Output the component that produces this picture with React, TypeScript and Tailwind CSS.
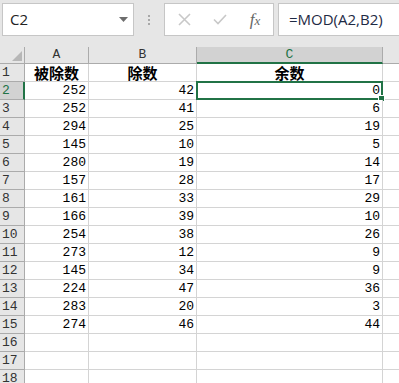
import React from "react";

const rows: [number, number][] = [
  [252, 42],
  [252, 41],
  [294, 25],
  [145, 10],
  [280, 19],
  [157, 28],
  [161, 33],
  [166, 39],
  [254, 38],
  [273, 12],
  [145, 34],
  [224, 47],
  [283, 20],
  [274, 46],
];

const cellFont = { fontFamily: '"Liberation Mono", "Noto Sans CJK SC", monospace' };
const uiFont = { fontFamily: '"Open Sans", "Noto Sans", sans-serif' };

function Toolbar() {
  return (
    <div className="flex h-[47px] items-start bg-[#e6e6e6] pt-[3px]">
      {/* name box */}
      <div className="ml-[2px] flex h-[33px] w-[132px] items-center justify-between border border-[#c6c6c6] bg-white pl-[7px] pr-[5px]">
        <span className="text-[15px] text-[#222]" style={uiFont}>
          C2
        </span>
        <svg width="9" height="5" viewBox="0 0 9 5">
          <path d="M0 0h9L4.5 5z" fill="#6d6d6d" />
        </svg>
      </div>
      {/* dots */}
      <div className="flex h-[33px] w-[30px] flex-col items-center justify-center gap-[2px]">
        <span className="h-[2px] w-[2px] bg-[#a8a8a8]" />
        <span className="h-[2px] w-[2px] bg-[#a8a8a8]" />
        <span className="h-[2px] w-[2px] bg-[#a8a8a8]" />
      </div>
      {/* cancel / enter / fx */}
      <div className="flex h-[33px] w-[110px] items-center border border-[#c6c6c6] bg-white">
        <div className="flex w-[38px] justify-center">
          <svg width="13" height="13" viewBox="0 0 13 13">
            <path d="M1 1l11 11M12 1L1 12" stroke="#c8c8c8" strokeWidth="1.6" />
          </svg>
        </div>
        <div className="flex w-[34px] justify-center">
          <svg width="14" height="11" viewBox="0 0 14 11">
            <path d="M1 5.5l4 4 8-8.5" stroke="#c8c8c8" strokeWidth="1.6" fill="none" />
          </svg>
        </div>
        <div
          className="flex w-[36px] items-baseline justify-center text-[17px] italic text-[#666]"
          style={{ fontFamily: '"Liberation Serif", serif' }}
        >
          f<span className="text-[13px]">x</span>
        </div>
      </div>
      {/* formula */}
      <div className="ml-[4px] flex h-[33px] flex-1 items-center border border-r-0 border-[#c6c6c6] bg-white pl-[10px]">
        <span className="text-[15px] text-[#1e2a44]" style={uiFont}>
          =MOD(A2,B2)
        </span>
      </div>
    </div>
  );
}

function HeaderRow() {
  return (
    <div className="flex h-[17px] text-[13px] leading-[16px]" style={cellFont}>
      <div className="relative w-[25px] shrink-0 border-r border-b border-[#ababab] bg-[#e6e6e6]">
        <svg className="absolute right-[2px] bottom-[2px]" width="10" height="10" viewBox="0 0 10 10">
          <path d="M10 0v10H0z" fill="#b7b7b7" />
        </svg>
      </div>
      <div className="w-[64px] shrink-0 border-r border-b border-[#ababab] bg-[#e6e6e6] text-center text-[#333]">A</div>
      <div className="w-[108px] shrink-0 border-r border-b border-[#ababab] bg-[#e6e6e6] text-center text-[#333]">B</div>
      <div className="w-[186px] shrink-0 border-r border-b-2 border-r-[#ababab] border-b-[#217346] bg-[#d2d2d2] text-center text-[#217346]">
        C
      </div>
      <div className="flex-1 border-b border-[#ababab] bg-[#e6e6e6]" />
    </div>
  );
}

function Row({
  n,
  a,
  b,
  c,
  bold,
  selected,
}: {
  n: number;
  a?: React.ReactNode;
  b?: React.ReactNode;
  c?: React.ReactNode;
  bold?: boolean;
  selected?: boolean;
}) {
  const align = bold ? "justify-center font-bold text-[15px]" : "justify-end pr-[2px]";
  const boldFont = bold ? { fontFamily: '"Noto Sans CJK SC", sans-serif' } : undefined;
  return (
    <div className="flex h-[18px] text-[13px] leading-[17px] text-black" style={cellFont}>
      <div
        className={`w-[25px] shrink-0 border-b border-[#ababab] pl-[2px] ${
          selected
            ? "border-r-2 border-r-[#217346] bg-[#d2d2d2] text-[#217346]"
            : "border-r border-r-[#ababab] bg-[#e6e6e6] text-[#333]"
        }`}
      >
        {n}
      </div>
      <div className={`flex w-[64px] shrink-0 items-end border-r border-b border-[#d4d4d4] bg-white ${align}`} style={boldFont}>
        {a}
      </div>
      <div className={`flex w-[108px] shrink-0 items-end border-r border-b border-[#d4d4d4] bg-white ${align}`} style={boldFont}>
        {b}
      </div>
      <div className={`relative flex w-[186px] shrink-0 items-end border-r border-b border-[#d4d4d4] bg-white ${align}`} style={boldFont}>
        {c}
        {selected && (
          <>
            <div className="absolute -top-[1px] -left-[1px] h-[19px] w-[187px] border-2 border-[#217346]" />
            <div className="absolute -right-[3px] -bottom-[3px] h-[5px] w-[5px] border border-white bg-[#217346] box-content" />
          </>
        )}
      </div>
      <div className="flex-1 border-b border-[#d4d4d4] bg-white" />
    </div>
  );
}

export default function App() {
  return (
    <div className="h-[383px] w-[399px] overflow-hidden bg-[#e6e6e6]">
      <Toolbar />
      <HeaderRow />
      <Row n={1} a="被除数" b="除数" c="余数" bold />
      {rows.map(([a, b], i) => (
        <Row key={i} n={i + 2} a={a} b={b} c={a % b} selected={i === 0} />
      ))}
      <Row n={16} />
      <Row n={17} />
      <Row n={18} />
    </div>
  );
}
